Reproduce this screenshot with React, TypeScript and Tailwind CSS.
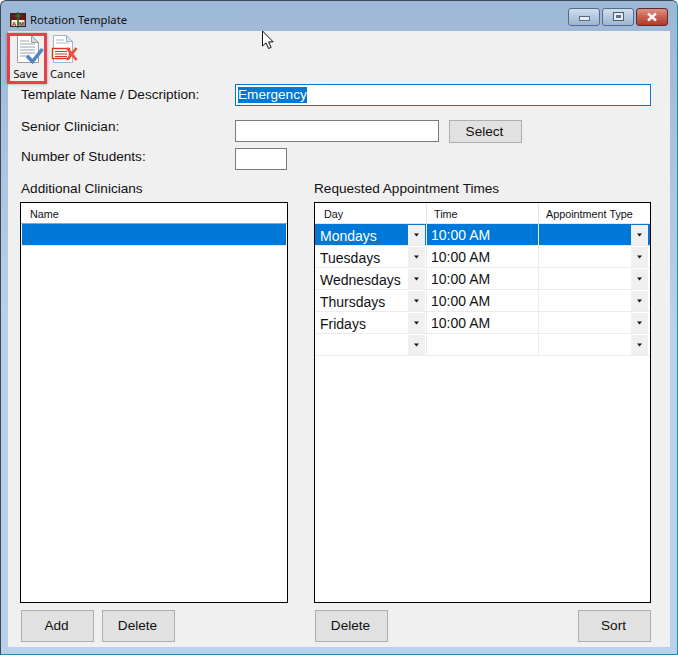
import React from "react";

const sans = "font-['Liberation_Sans',Arial,sans-serif]";
const seg = "font-['Noto_Sans',sans-serif]";

function Arrow() {
  return (
    <svg width="7" height="4" viewBox="0 0 7 4" className="block">
      <path d="M1 0.5h5L3.5 3.5z" fill="#111" />
    </svg>
  );
}

function Btn({ label, w = "w-[73px]", h = "h-[32px]" }: { label: string; w?: string; h?: string }) {
  return (
    <div className={`${w} ${h} pt-px pr-[2px] flex items-center justify-center bg-[#e1e1e1] border border-[#adadad] text-[13.6px] text-[#111] ${sans}`}>
      {label}
    </div>
  );
}

function DropBtn() {
  return (
    <div className="w-[17px] h-[20px] flex items-center justify-center shrink-0 bg-[#f0f0f0]">
      <Arrow />
    </div>
  );
}

function SaveIcon() {
  return (
    <svg width="28" height="32" viewBox="0 0 28 32" className="self-start ml-[8px]">
      <path d="M1.5 1.5h14l7 7v20h-21z" fill="#fff" stroke="#9a9a9a" />
      <path d="M15.5 1.5v7h7z" fill="#d9d9d9" stroke="#9a9a9a" />
      <path d="M4 7h9M4 10h15M4 13h15M4 16h15M4 19h15M4 22h10" stroke="#9aa3ad" strokeWidth="1" />
      <path d="M11 22l5.5 5.5L26.5 15" fill="none" stroke="#4f86c0" strokeWidth="3.6" />
    </svg>
  );
}

function CancelIcon() {
  return (
    <svg width="30" height="30" viewBox="0 0 30 30" className="self-start ml-[4px]">
      <path d="M3.5 1.5h13l6 6v21h-19z" fill="#fff" stroke="#9fb4cc" />
      <path d="M16.5 1.5v6h6z" fill="#dce6f0" stroke="#9fb4cc" />
      <path d="M6 6h8M6 9h13" stroke="#aeb9c6" />
      <rect x="2.5" y="14.5" width="17" height="10" fill="#fff" stroke="#d9352b" strokeWidth="1.4" />
      <path d="M5 17.5h12M5 20h12M5 22.5h12" stroke="#d9352b" />
      <path d="M17 14l9.5 12M26.5 14L17 26" stroke="#e8503f" strokeWidth="2.8" />
    </svg>
  );
}

function AppIcon() {
  return (
    <svg width="16" height="16" viewBox="0 0 16 16">
      <rect x="0.5" y="1.5" width="15" height="13" fill="#6e1616" stroke="#2a2a1a" />
      <rect x="1.5" y="8" width="6" height="6" fill="#f6f1e2" />
      <rect x="8.5" y="8" width="6" height="6" fill="#f6f1e2" />
      <text x="2" y="13.5" fontSize="6" fontWeight="700" fill="#6e1616" fontFamily="'Liberation Sans',sans-serif">A</text>
      <text x="9" y="13.5" fontSize="6" fontWeight="700" fill="#6e1616" fontFamily="'Liberation Sans',sans-serif">M</text>
      <path d="M8 0v16M5 4h6" stroke="#1d7a2c" strokeWidth="1.5" />
    </svg>
  );
}

function WinButton({ kind }: { kind: "min" | "max" | "close" }) {
  const base = "w-[32px] h-[18px] rounded-[3px] border flex items-center justify-center";
  if (kind === "close") {
    return (
      <div className={`${base} border-[#5a2b33] bg-gradient-to-b from-[#dd9084] via-[#c9604f] to-[#b03a28]`}>
        <svg width="12" height="10" viewBox="0 0 12 10">
          <path d="M2 1.5l8 7M10 1.5l-8 7" stroke="#f4f4f4" strokeWidth="2.6" />
        </svg>
      </div>
    );
  }
  return (
    <div className={`${base} border-[#566a85] bg-gradient-to-b from-[#d0dfee] via-[#b3c9e0] to-[#9cb6d2]`}>
      {kind === "min" ? (
        <div className="w-[11px] h-[5px] mt-[3px] bg-[#e8edf3] border border-[#5a6a80]" />
      ) : (
        <div className="w-[11px] h-[9px] bg-[#e8edf3] border border-[#4a5a70] flex items-center justify-center">
          <div className="w-[5px] h-[3px] bg-[#5f7390]" />
        </div>
      )}
    </div>
  );
}

const rows = [
  { day: "Mondays", time: "10:00 AM" },
  { day: "Tuesdays", time: "10:00 AM" },
  { day: "Wednesdays", time: "10:00 AM" },
  { day: "Thursdays", time: "10:00 AM" },
  { day: "Fridays", time: "10:00 AM" },
  { day: "", time: "" },
];

function Grid() {
  return (
    <div className="flex-1 min-h-0 border border-black bg-white">
      <div className={`flex h-[21px] border-b border-[#e5e5e5] text-[10.8px] text-[#111] ${sans}`}>
        <div className="w-[111px] ml-px pl-[8px] pt-[2px] flex items-center border-r border-[#e5e5e5]">Day</div>
        <div className="w-[112px] pl-[7px] pt-[2px] flex items-center border-r border-[#e5e5e5]">Time</div>
        <div className="flex-1 pl-[7px] pt-[2px] flex items-center">Appointment Type</div>
      </div>
      {rows.map((r, i) => {
        const sel = i === 0;
        return (
          <div
            key={i}
            className={`flex h-[22px] border-b border-[#ececec] text-[14px] ${sans} ${sel ? "bg-[#0078d7] text-white" : "text-[#111]"}`}
          >
            <div className="w-[111px] ml-px flex items-center justify-between pr-px border-r border-[#ececec]">
              <span className="pl-[4px] pt-[4px]">{r.day}</span>
              <DropBtn />
            </div>
            <div className="w-[112px] pl-[4px] pt-[2px] flex items-center border-r border-[#ececec]">{r.time}</div>
            <div className={`flex-1 flex items-center justify-end pr-[1px] ${sel ? "border border-[#0078d7] bg-[#0078d7]" : "pr-[2px]"}`}>
              <DropBtn />
            </div>
          </div>
        );
      })}
    </div>
  );
}

export default function App() {
  return (
    <div className="relative w-[678px] h-[655px] overflow-hidden flex flex-col border border-[#3a4a5a] border-r-[#1b8fb0] border-b-[#1b8fb0] rounded-t-[6px] bg-gradient-to-b from-[#9db8d5] via-[#b9d1ea] to-[#b9d1ea]">
      {/* title bar */}
      <div className="h-[30px] shrink-0 flex items-center pl-[9px] pr-[9px] pt-[8px]">
        <AppIcon />
        <span className={`ml-[4px] text-[11.3px] text-[#111] ${seg}`}>Rotation Template</span>
        <div className="ml-auto flex gap-[2px] mb-[7px]">
          <WinButton kind="min" />
          <WinButton kind="max" />
          <WinButton kind="close" />
        </div>
      </div>

      {/* client */}
      <div className="flex-1 min-h-0 mx-[7px] mb-[7px] bg-[#f0f0f0] flex flex-col">
        {/* toolbar */}
        <div className="h-[53px] shrink-0 flex">
          <div className="relative w-[35px] flex flex-col items-center pt-[3px]">
            <SaveIcon />
            <span className={`text-[11.3px] leading-[16px] text-[#111] ${seg}`}>Save</span>
            <div className="absolute left-[-1px] top-[2px] w-[40px] h-[51px] border-[3px] border-[#e8404a] shadow-[0_0_3px_rgba(0,0,0,0.35)]" />
          </div>
          <div className="w-[43px] ml-[3px] flex flex-col items-center pt-[3px]">
            <CancelIcon />
            <span className={`mt-[2px] text-[11.3px] leading-[16px] text-[#111] ${seg}`}>Cancel</span>
          </div>
        </div>

        {/* form */}
        <div className={`pl-[13px] pr-[19px] text-[13.6px] text-[#111] ${sans}`}>
          <div className="flex items-center h-[22px]">
            <label className="w-[214px]">Template Name / Description:</label>
            <div className="flex-1 h-[22px] border border-[#0078d7] bg-white flex items-center pl-[2px]">
              <span className="bg-[#0078d7] text-white leading-[16px]">Emergency</span>
            </div>
          </div>
          <div className="flex items-start h-[23px] mt-[14px]">
            <label className="w-[214px] -mt-[3px]">Senior Clinician:</label>
            <div className="w-[204px] h-[22px] border border-[#7a7a7a] bg-white" />
            <div className="ml-[10px]">
              <Btn label="Select" h="h-[23px]" />
            </div>
          </div>
          <div className="flex items-start h-[22px] mt-[5px]">
            <label className="w-[214px] -mt-[1px]">Number of Students:</label>
            <div className="w-[52px] h-[22px] border border-[#7a7a7a] bg-white" />
          </div>
        </div>

        {/* panels */}
        <div className={`flex-1 min-h-0 flex pl-[12px] pr-[19px] mt-[10px] text-[13.6px] text-[#111] ${sans}`}>
          <div className="w-[268px] flex flex-col">
            <div className="pl-[1px] h-[22px] leading-[17px]">Additional Clinicians</div>
            <div className="flex-1 min-h-0 border border-black bg-white">
              <div className="h-[21px] pl-[9px] pt-[2px] flex items-center text-[10.8px] border-b border-[#a0a0a0]">Name</div>
              <div className="h-[21px] mx-px bg-[#0078d7]" />
              <div className="h-px mx-px bg-[#ececec]" />
            </div>
            <div className="flex gap-[8px] pt-[7px] pl-[1px] pb-[5px]">
              <Btn label="Add" />
              <Btn label="Delete" />
            </div>
          </div>
          <div className="w-[337px] ml-[26px] flex flex-col">
            <div className="h-[22px] leading-[17px]">Requested Appointment Times</div>
            <Grid />
            <div className="flex justify-between pt-[7px] pl-[1px] pb-[5px]">
              <Btn label="Delete" />
              <Btn label="Sort" />
            </div>
          </div>
        </div>
      </div>

      {/* mouse cursor over content */}
      <svg className="absolute left-[260px] top-[29px]" width="15" height="21" viewBox="0 0 15 21">
        <path d="M1.5 1v15l3.5-3.2 2.5 5.7 2.6-1.1-2.5-5.5h4.6z" fill="#fff" stroke="#111" strokeWidth="1" />
      </svg>
    </div>
  );
}
